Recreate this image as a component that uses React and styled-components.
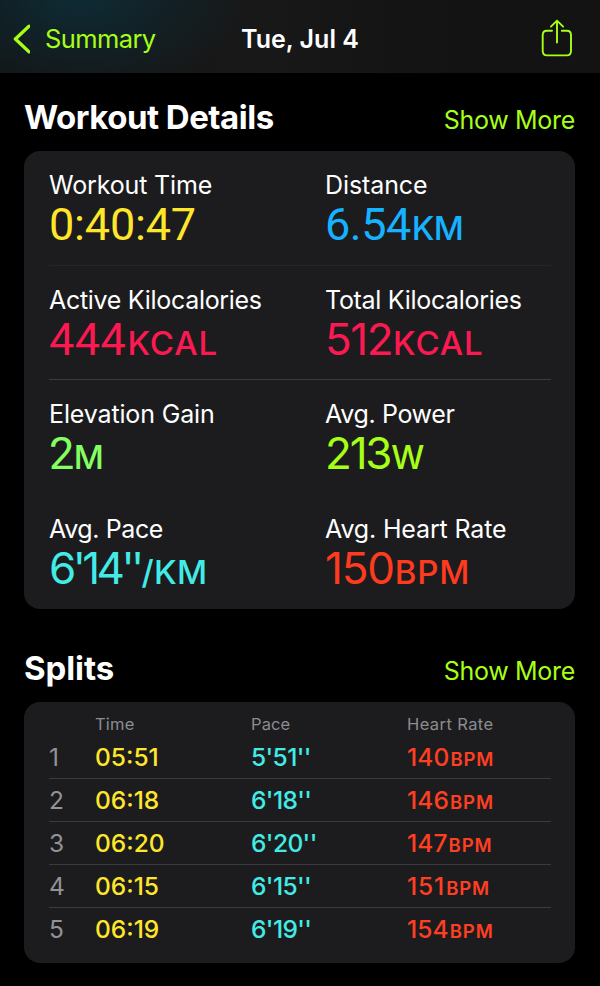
import styled, { createGlobalStyle } from "styled-components";

const GlobalStyle = createGlobalStyle`
  * {
    box-sizing: border-box;
    margin: 0;
    padding: 0;
  }
  body {
    background: #000;
    color: #fff;
    font-family: Inter, "Liberation Sans", sans-serif;
    -webkit-font-smoothing: antialiased;
  }
`;

// track / valueTrack / unitTrack are letter spacings in px
// narrow values use Roboto, the ones with a "1" need Inter's proportional digits
const metrics = [
  { label: "Workout Time", track: -0.15, value: "0:40:47", narrow: true, valueTrack: -0.2, color: "#ffe62b", line: "#252527" },
  { label: "Distance", track: -0.1, value: "6.54", narrow: true, valueTrack: -0.5, unit: "KM", unitTrack: -0.8, color: "#17b2ff", line: "#252527" },
  { label: "Active Kilocalories", track: -0.3, value: "444", narrow: true, valueTrack: 0.5, unit: "KCAL", unitTrack: 0.9, color: "#fc1951", line: "#3b3b3d" },
  { label: "Total Kilocalories", track: -0.3, value: "512", valueTrack: -1.5, unit: "KCAL", unitTrack: 0.9, color: "#fc1951", line: "#3b3b3d" },
  { label: "Elevation Gain", track: -0.15, value: "2", narrow: true, valueTrack: -1.6, unit: "M", unitTrack: 0, color: "#83ff62", line: "#1d1d1f" },
  { label: "Avg. Power", track: -0.35, value: "213", valueTrack: -2.2, unit: "W", unitTrack: 0, color: "#a6ff16", line: "#1d1d1f" },
  { label: "Avg. Pace", track: -0.4, value: "6'14''", valueTrack: -3.6, unit: "/KM", unitTrack: 0.3, color: "#43ebe6", line: "transparent" },
  { label: "Avg. Heart Rate", track: -0.15, value: "150", valueTrack: -1.2, unit: "BPM", unitTrack: 0.8, color: "#ff3b1f", line: "transparent" },
];

const splits = [
  { time: "05:51", pace: "5'51''", rate: 140, rateTrack: 0.1 },
  { time: "06:18", pace: "6'18''", rate: 146, rateTrack: 0.1 },
  { time: "06:20", pace: "6'20''", rate: 147, rateTrack: 0.1 },
  { time: "06:15", pace: "6'15''", rate: 151, rateTrack: 0.9 },
  { time: "06:19", pace: "6'19''", rate: 154, rateTrack: 0.1 },
];

export default function App() {
  return (
    <Page>
      <GlobalStyle />
      <NavBar>
        <BackButton>
          <svg width="18" height="30" viewBox="0 0 18 30" fill="none">
            <path
              d="M17 2.2L3.4 15L17 27.8"
              stroke="currentColor"
              strokeWidth="3.4"
              strokeLinecap="round"
              strokeLinejoin="round"
            />
          </svg>
          Summary
        </BackButton>
        <NavTitle>Tue, Jul 4</NavTitle>
        <ShareButton aria-label="Share">
          <svg width="32" height="40" viewBox="0 0 32 40" fill="none">
            <path
              d="M11 11.8H6Q1.7 11.8 1.7 16.2V32Q1.7 36.4 6 36.4H25.8Q30 36.4 30 32V16.2Q30 11.8 25.8 11.8H20.8M16 23.6V1.6M9.9 7.6L16 1.6L22.1 7.6"
              stroke="currentColor"
              strokeWidth="1.9"
              strokeLinecap="round"
              strokeLinejoin="round"
            />
          </svg>
        </ShareButton>
      </NavBar>

      <SectionHead>
        <Heading $track={-0.5}>Workout Details</Heading>
        <ShowMore>Show More</ShowMore>
      </SectionHead>
      <DetailsCard>
        {metrics.map((m) => (
          <Metric key={m.label} $line={m.line}>
            <MetricLabel $track={m.track}>{m.label}</MetricLabel>
            <MetricValue $color={m.color} $track={m.valueTrack} $narrow={m.narrow}>
              {m.value}
              {m.unit && <Unit $track={m.unitTrack}>{m.unit}</Unit>}
            </MetricValue>
          </Metric>
        ))}
      </DetailsCard>

      <SectionHead $splits>
        <Heading $track={-0.1}>Splits</Heading>
        <ShowMore>Show More</ShowMore>
      </SectionHead>
      <SplitsCard>
        <SplitHeader>
          <span />
          <SplitTitle $track={0.2}>Time</SplitTitle>
          <SplitTitle $track={0.1}>Pace</SplitTitle>
          <SplitTitle $track={0.4}>Heart Rate</SplitTitle>
        </SplitHeader>
        {splits.map((s, i) => (
          <SplitRow key={s.time}>
            <SplitCell $color="#929297">{i + 1}</SplitCell>
            <SplitCell $color="#ffe62b" $bold>{s.time}</SplitCell>
            <SplitCell $color="#43ebe6" $bold $track={-0.6}>{s.pace}</SplitCell>
            <SplitCell $color="#ff3f22" $bold $track={s.rateTrack}>
              {s.rate}
              <SmallUnit>BPM</SmallUnit>
            </SplitCell>
          </SplitRow>
        ))}
      </SplitsCard>
    </Page>
  );
}

const Page = styled.div`
  width: 600px;
  height: 986px;
  overflow: hidden;
  background: #000;
`;

const NavBar = styled.header`
  display: grid;
  grid-template-columns: 1fr auto 1fr;
  align-items: center;
  height: 73px;
  padding: 5px 12px 0;
  background:
    radial-gradient(ellipse 170px 100px at 80px -5px, #0e2b35 0%, rgba(14, 43, 53, 0) 100%),
    linear-gradient(90deg, #131516 0%, #181818 45%, #131313 75%);
`;

const BackButton = styled.button`
  display: flex;
  align-items: center;
  gap: 15px;
  border: none;
  background: none;
  color: #a6ff16;
  font: inherit;
  font-size: 25.5px;
  line-height: 30px;
  letter-spacing: -0.6px;
`;

const NavTitle = styled.h1`
  font-size: 25px;
  font-weight: 600;
  line-height: 30px;
`;

const ShareButton = styled.button`
  justify-self: end;
  height: 40px;
  margin-right: 15px;
  border: none;
  background: none;
  color: #a6ff16;
  svg {
    display: block;
  }
`;

const SectionHead = styled.div`
  display: flex;
  align-items: baseline;
  justify-content: space-between;
  height: ${(p) => (p.$splits ? "93px" : "78px")};
  padding: ${(p) => (p.$splits ? "39px" : "24px")} 25px 0 24px;
`;

const Heading = styled.h2`
  font-size: 33px;
  font-weight: 700;
  line-height: 40px;
  letter-spacing: ${(p) => p.$track}px;
`;

const ShowMore = styled.a`
  color: #a6ff16;
  font-size: 25px;
  line-height: 30px;
  letter-spacing: -0.3px;
`;

const Card = styled.section`
  margin: 0 25px 0 24px;
  padding: 0 24px 0 25px;
  border-radius: 16px;
  background: #1c1c1e;
`;

const DetailsCard = styled(Card)`
  display: grid;
  grid-template-columns: 276px 1fr;
  grid-auto-rows: 114.5px;
  height: 458px;
`;

const Metric = styled.div`
  padding-top: 19px;
  border-bottom: 1px solid ${(p) => p.$line};
  white-space: nowrap;
`;

const MetricLabel = styled.div`
  font-size: 25px;
  line-height: 30px;
  letter-spacing: ${(p) => p.$track}px;
`;

const MetricValue = styled.div`
  margin-top: ${(p) => (p.$narrow ? "3px" : "2px")};
  color: ${(p) => p.$color};
  font-family: ${(p) => (p.$narrow ? "Roboto, sans-serif" : "Inter, sans-serif")};
  font-size: ${(p) => (p.$narrow ? "45px" : "44px")};
  line-height: 44px;
  letter-spacing: ${(p) => p.$track}px;
`;

const Unit = styled.span`
  margin-left: 1px;
  font-family: Inter, sans-serif;
  font-size: 33px;
  font-weight: 500;
  line-height: 0;
  letter-spacing: ${(p) => p.$track}px;
`;

const SplitsCard = styled(Card)`
  height: 261px;
  padding-top: 12px;
`;

const SplitHeader = styled.div`
  display: grid;
  grid-template-columns: 46px 156px 156px 1fr;
  height: 22px;
`;

const SplitTitle = styled.span`
  color: #8c8c91;
  font-size: 16.5px;
  line-height: 21px;
  letter-spacing: ${(p) => p.$track}px;
`;

const SplitRow = styled.div`
  display: grid;
  grid-template-columns: 46px 156px 156px 1fr;
  height: 43px;
  border-bottom: 1px solid #3b3b3d;
  &:last-child {
    border-bottom: none;
  }
`;

const SplitCell = styled.span`
  color: ${(p) => p.$color};
  font-size: 24.5px;
  font-weight: ${(p) => (p.$bold ? 500 : 400)};
  line-height: 42px;
  letter-spacing: ${(p) => p.$track || 0}px;
`;

const SmallUnit = styled.span`
  margin-left: 1px;
  font-size: 18.5px;
  font-weight: 600;
  letter-spacing: 0.9px;
`;
